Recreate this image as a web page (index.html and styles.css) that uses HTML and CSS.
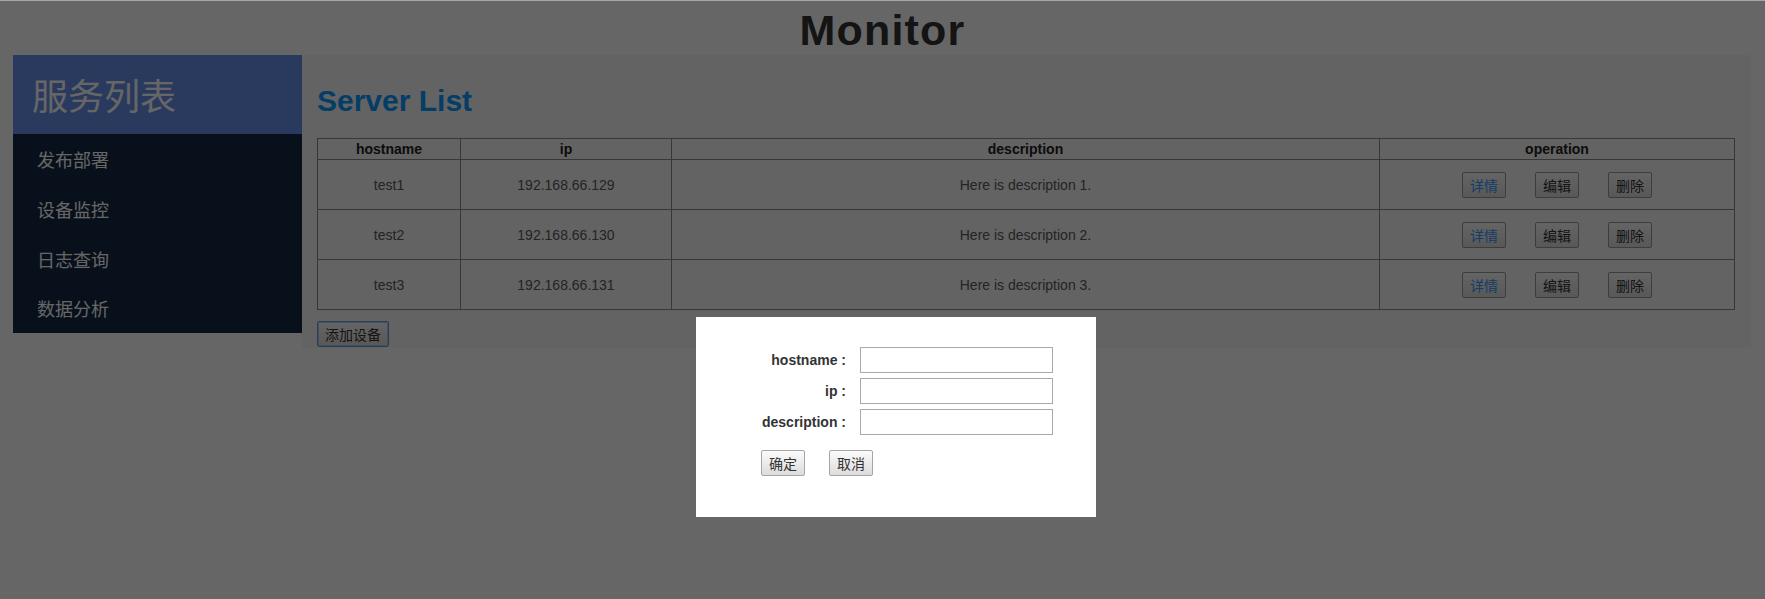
FILE: index.html
```html
<!DOCTYPE html>
<html lang="zh-CN">
<head>
<meta charset="utf-8">
<title>Monitor</title>
<link rel="stylesheet" href="styles.css">
</head>
<body>
<h1 class="site-title">Monitor</h1>
<div class="layout">
  <aside class="sidebar">
    <div class="sidebar-title">服务列表</div>
    <ul class="nav">
      <li class="nav-item">发布部署</li>
      <li class="nav-item">设备监控</li>
      <li class="nav-item">日志查询</li>
      <li class="nav-item">数据分析</li>
    </ul>
  </aside>
  <main class="content">
    <h2 class="page-title">Server List</h2>
    <table class="server-table">
      <colgroup>
        <col class="c-host"><col class="c-ip"><col class="c-desc"><col class="c-op">
      </colgroup>
      <thead>
        <tr><th>hostname</th><th>ip</th><th>description</th><th>operation</th></tr>
      </thead>
      <tbody>
        <tr>
          <td>test1</td><td>192.168.66.129</td><td>Here is description 1.</td>
          <td><div class="ops"><button class="btn btn-detail">详情</button><button class="btn">编辑</button><button class="btn">删除</button></div></td>
        </tr>
        <tr>
          <td>test2</td><td>192.168.66.130</td><td>Here is description 2.</td>
          <td><div class="ops"><button class="btn btn-detail">详情</button><button class="btn">编辑</button><button class="btn">删除</button></div></td>
        </tr>
        <tr>
          <td>test3</td><td>192.168.66.131</td><td>Here is description 3.</td>
          <td><div class="ops"><button class="btn btn-detail">详情</button><button class="btn">编辑</button><button class="btn">删除</button></div></td>
        </tr>
      </tbody>
    </table>
    <button class="btn btn-add">添加设备</button>
  </main>
</div>
<div class="overlay"></div>
<div class="modal">
  <form class="modal-form">
    <label class="field-label" for="f-host">hostname :</label>
    <input class="field-input" id="f-host" type="text">
    <label class="field-label" for="f-ip">ip :</label>
    <input class="field-input" id="f-ip" type="text">
    <label class="field-label" for="f-desc">description :</label>
    <input class="field-input" id="f-desc" type="text">
  </form>
  <div class="modal-actions">
    <button class="btn btn-light">确定</button>
    <button class="btn btn-light">取消</button>
  </div>
</div>
</body>
</html>
```

FILE: styles.css
```css
* { box-sizing: border-box; }

body {
  margin: 0;
  background: #ffffff;
  font-family: "Liberation Sans", Arial, "Noto Sans CJK SC", sans-serif;
  color: #333;
}

.site-title {
  margin: 0;
  height: 55px;
  padding-top: 5px;
  line-height: 50px;
  font-size: 43px;
  letter-spacing: 1.2px;
  font-weight: bold;
  text-align: center;
  color: #333;
}

.layout {
  display: flex;
  align-items: flex-start;
  margin: 0 15px 0 13px;
}

.sidebar {
  width: 289px;
  flex: none;
  background: #142a44;
  font-family: "Noto Sans CJK SC", "Liberation Sans", sans-serif;
}

.sidebar-title {
  height: 79px;
  line-height: 79px;
  padding-left: 19px;
  font-size: 36px;
  color: #ffffff;
  background: #6991eb;
}

.nav {
  list-style: none;
  margin: 0;
  padding: 0;
}

.nav-item {
  height: 49.75px;
  line-height: 51px;
  padding-left: 24px;
  font-size: 18px;
  color: #ffffff;
}

.content {
  flex: 1;
  background: #f7f7f7;
  padding: 30px 16px 1px 15px;
  min-height: 292px;
}

.page-title {
  margin: 0 0 22px;
  line-height: 31px;
  font-size: 30px;
  font-weight: bold;
  color: #0a99ff;
}

.server-table {
  width: 1417px;
  table-layout: fixed;
  border-collapse: collapse;
  border: 1px solid #333;
  font-size: 14px;
}

.c-host { width: 143px; }
.c-ip { width: 211px; }
.c-desc { width: 708px; }
.c-op { width: 355px; }

.server-table th,
.server-table td {
  border: 1px solid #8a8a8a;
  padding: 0;
  text-align: center;
  vertical-align: middle;
}

.server-table th {
  height: 21px;
  font-weight: bold;
  color: #222;
}

.server-table td {
  height: 50px;
  color: #5a5a5a;
}

.ops {
  display: flex;
  justify-content: center;
  gap: 29px;
}

.btn {
  height: 26px;
  padding: 0 7px;
  margin: 0;
  font-family: "Noto Sans CJK SC", "Liberation Sans", sans-serif;
  font-size: 14px;
  line-height: 24px;
  color: #333;
  background: linear-gradient(#fbfbfb, #dcdcdc);
  border: 1px solid #9a9a9a;
  border-radius: 2px;
}

.btn-detail { color: #3399ff; }

.btn-add {
  display: block;
  margin-top: 11px;
  border-color: #5d9de0;
  box-shadow: inset 0 0 0 1px rgba(140, 185, 235, 0.6);
}

.overlay {
  position: fixed;
  inset: 0;
  background: rgba(0, 0, 0, 0.6);
  border-top: 1px solid rgba(0, 0, 0, 0.35);
  background-clip: padding-box;
}

.modal {
  position: fixed;
  left: 696px;
  top: 317px;
  width: 400px;
  height: 200px;
  background: #ffffff;
  padding-top: 30px;
}

.modal-form {
  display: grid;
  grid-template-columns: 150px 193px;
  column-gap: 14px;
  row-gap: 5px;
  align-items: center;
}

.field-label {
  text-align: right;
  font-size: 14px;
  font-weight: bold;
  color: #333;
}

.field-input {
  width: 193px;
  height: 26px;
  margin: 0;
  border: 1px solid #a9a9a9;
  border-radius: 0;
  background: #fff;
}

.modal-actions {
  display: flex;
  gap: 24px;
  margin-top: 15px;
  padding-left: 65px;
}

.btn-light {
  border-color: #a6a6a6;
}
```
